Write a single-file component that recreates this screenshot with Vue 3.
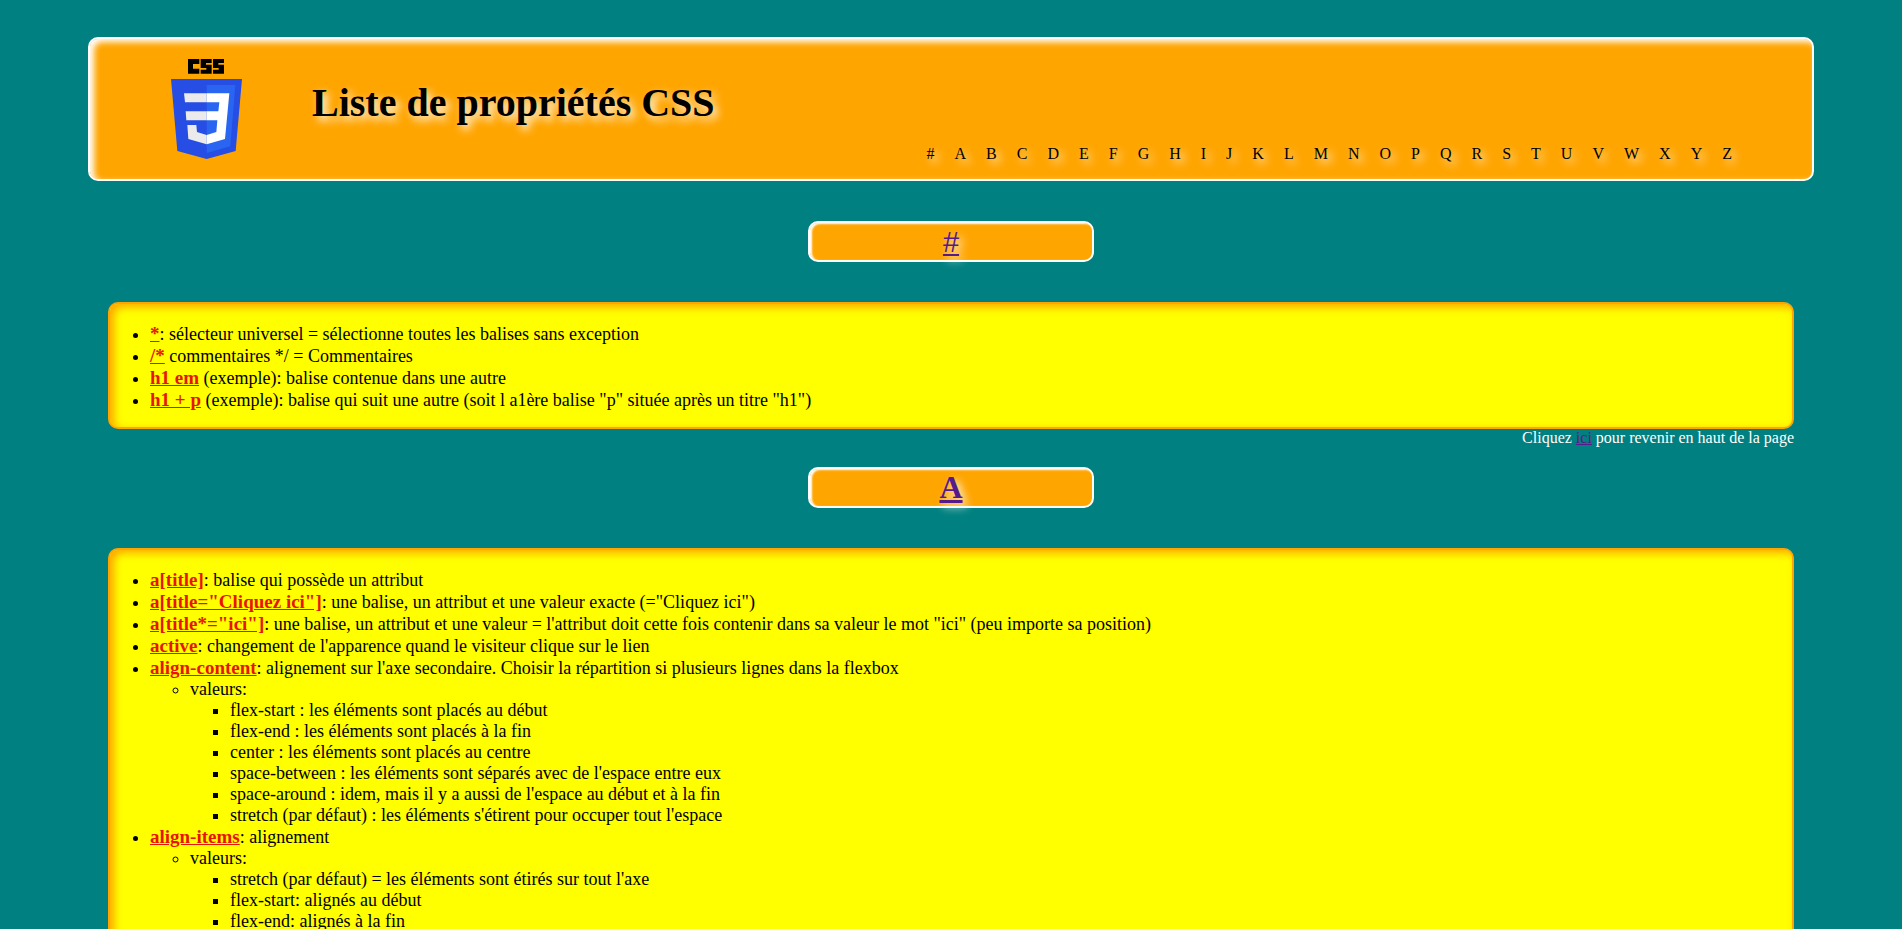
<script setup>
const letters = ['#', ...'ABCDEFGHIJKLMNOPQRSTUVWXYZ']

const sections = [
  {
    id: 'diese',
    title: '#',
    symbol: true,
    items: [
      { term: '*', text: ': sélecteur universel = sélectionne toutes les balises sans exception' },
      { term: '/*', text: ' commentaires */ = Commentaires' },
      { term: 'h1 em', text: ' (exemple): balise contenue dans une autre' },
      { term: 'h1 + p', text: ' (exemple): balise qui suit une autre (soit l a1ère balise "p" située après un titre "h1")' },
    ],
  },
  {
    id: 'A',
    title: 'A',
    items: [
      { term: 'a[title]', text: ': balise qui possède un attribut' },
      { term: 'a[title="Cliquez ici"]', text: ': une balise, un attribut et une valeur exacte (="Cliquez ici")' },
      { term: 'a[title*="ici"]', text: ': une balise, un attribut et une valeur = l\'attribut doit cette fois contenir dans sa valeur le mot "ici" (peu importe sa position)' },
      { term: 'active', text: ": changement de l'apparence quand le visiteur clique sur le lien" },
      {
        term: 'align-content',
        text: ": alignement sur l'axe secondaire. Choisir la répartition si plusieurs lignes dans la flexbox",
        values: [
          'flex-start : les éléments sont placés au début',
          'flex-end : les éléments sont placés à la fin',
          'center : les éléments sont placés au centre',
          "space-between : les éléments sont séparés avec de l'espace entre eux",
          "space-around : idem, mais il y a aussi de l'espace au début et à la fin",
          "stretch (par défaut) : les éléments s'étirent pour occuper tout l'espace",
        ],
      },
      {
        term: 'align-items',
        text: ': alignement',
        values: [
          "stretch (par défaut) = les éléments sont étirés sur tout l'axe",
          'flex-start: alignés au début',
          'flex-end: alignés à la fin',
        ],
      },
    ],
  },
]

const anchor = (letter) => (letter === '#' ? '#diese' : '#' + letter)
</script>

<template>
  <div class="page">
    <header id="haut" class="banner">
      <svg class="logo" viewBox="0 0 213 300" role="img" aria-label="Logo CSS3">
        <path d="M51 0H85V15H66V29H85V44H51ZM89 0H122V12H105V17H122V44H89V32H106V27H89ZM126 0H159V12H142V17H159V44H126V32H143V27H126Z" fill="#000" />
        <path d="M0 60H213L194 276L107 300L19 276Z" fill="#264de4" />
        <path d="M107 78H193L178 262L107 282Z" fill="#2965f1" />
        <path d="M39 103H107V130H42ZM44 157H107V184H46ZM49 198H76L78 219L107 228V256L52 240Z" fill="#ebebeb" />
        <path d="M107 103H175L162 240L107 256V228L136 219L139 184H107V157H142L145 130H107Z" fill="#fff" />
      </svg>
      <h1 class="title">Liste de propriétés CSS</h1>
      <nav class="index">
        <a v-for="letter in letters" :key="letter" :href="anchor(letter)">{{ letter }}</a>
      </nav>
    </header>

    <section v-for="(section, position) in sections" :id="section.id" :key="section.id">
      <h2 class="heading"><a href="#haut" :class="{ symbol: section.symbol }">{{ section.title }}</a></h2>
      <div class="card">
        <ul class="entries">
          <li v-for="item in section.items" :key="item.term">
            <a class="term" href="#haut">{{ item.term }}</a>{{ item.text }}
            <ul v-if="item.values">
              <li>
                valeurs:
                <ul>
                  <li v-for="value in item.values" :key="value">{{ value }}</li>
                </ul>
              </li>
            </ul>
          </li>
        </ul>
      </div>
      <p v-if="position < sections.length - 1" class="back">Cliquez <a href="#haut">ici</a> pour revenir en haut de la page</p>
    </section>
  </div>
</template>

<style>
html {
  background: #008080;
  scrollbar-width: none;
}
</style>

<style scoped>
.page {
  padding: 37px 8px 0;
  font-family: "Liberation Serif", "Times New Roman", serif;
  font-size: 18px;
  color: #000;
}

.banner {
  display: flex;
  align-items: center;
  box-sizing: border-box;
  height: 144px;
  margin: 0 80px;
  padding: 0 80px 0 81px;
  border: 2px solid #fff;
  border-radius: 10px;
  background: #ffa500;
  box-shadow: inset 4px 3px 6px #fff;
}

.logo {
  width: 71px;
  height: 100px;
}

.title {
  margin: 0 0 12px 70px;
  font-size: 40px;
  line-height: 46px;
  text-shadow: 4px 4px 8px #fff;
}

.index {
  display: flex;
  align-self: flex-end;
  gap: 20px;
  margin: 0 0 16px auto;
  font-size: 16px;
  line-height: 18px;
}

.index a {
  color: #000;
  text-decoration: none;
  text-shadow: 4px 4px 8px #fff;
}

.heading {
  width: 15%;
  margin: 40px auto;
  border: 2px solid #fff;
  border-radius: 10px;
  background: #ffa500;
  box-shadow: inset 2px 1px 2px #fff;
  font-size: 32px;
  line-height: 37px;
  text-align: center;
  text-shadow: 4px 4px 8px #fff;
}

.heading a,
.back a {
  color: #551a8b;
}

.heading .symbol {
  font-family: "Liberation Sans", Arial, sans-serif;
  font-size: 29px;
  font-weight: normal;
  line-height: 32px;
}

.card {
  margin: 0 100px;
  padding: 19px 0 16px;
  border: 2px solid #ffa500;
  border-radius: 10px;
  background: #ff0;
  box-shadow: inset 4px 3px 8px #ffa500;
}

.card ul {
  margin: 0;
  padding-left: 40px;
  line-height: 21px;
}

.term {
  color: #e81400;
  font-size: 19px;
  font-weight: bold;
  line-height: 22px;
}

.back {
  margin: 0 100px -20px;
  color: #fff;
  font-size: 16px;
  line-height: 18px;
  text-align: right;
}
</style>
